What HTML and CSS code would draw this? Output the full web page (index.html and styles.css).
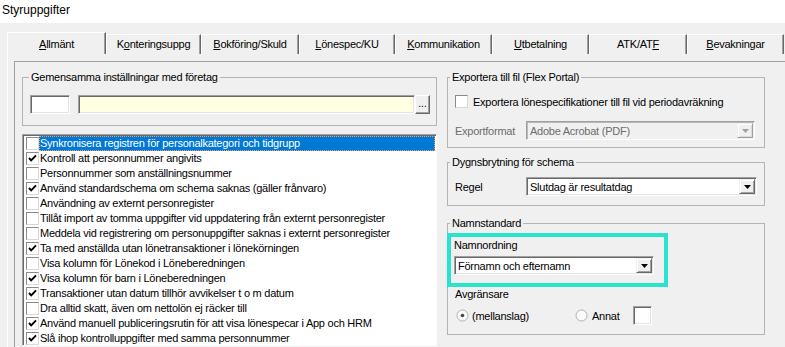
FILE: index.html
```html
<!DOCTYPE html>
<html lang="sv">
<head>
<meta charset="utf-8">
<title>Styruppgifter</title>
<link rel="stylesheet" href="styles.css">
</head>
<body>
<div class="title">Styruppgifter</div>
<div class="tabstrip">
  <div class="tab active w99"><span><u>A</u>llmänt</span></div>
  <div class="tab w95"><span>K<u>o</u>nteringsuppg</span></div>
  <div class="tab w98"><span><u>B</u>okföring/Skuld</span></div>
  <div class="tab w96"><span><u>L</u>önespec/KU</span></div>
  <div class="tab w97"><span><u>K</u>ommunikation</span></div>
  <div class="tab w97"><span><u>U</u>tbetalning</span></div>
  <div class="tab w98"><span>ATK/AT<u>F</u></span></div>
  <div class="tab w97"><span><u>B</u>evakningar</span></div>
</div>
<div class="panel">
  <div class="frame">
    <div class="col-left">
      <fieldset class="group">
        <legend class="legend-left">Gemensamma inställningar med företag</legend>
        <div class="group-body common">
          <div class="field small"></div>
          <div class="field yellow"></div>
          <div class="btn-dots">...</div>
        </div>
      </fieldset>
      <div class="checklist">
        <div class="item selected"><span class="cb"></span><span class="lbl">Synkronisera registren för personalkategori och tidgrupp</span></div>
        <div class="item"><span class="cb checked"><svg width="11" height="11" viewBox="0 0 11 11"><path d="M2 5 L4.2 7.4 L9 2.4" stroke="#000" stroke-width="1.9" fill="none"/></svg></span><span class="lbl">Kontroll att personnummer angivits</span></div>
        <div class="item"><span class="cb"></span><span class="lbl">Personnummer som anställningsnummer</span></div>
        <div class="item"><span class="cb checked"><svg width="11" height="11" viewBox="0 0 11 11"><path d="M2 5 L4.2 7.4 L9 2.4" stroke="#000" stroke-width="1.9" fill="none"/></svg></span><span class="lbl">Använd standardschema om schema saknas (gäller frånvaro)</span></div>
        <div class="item"><span class="cb"></span><span class="lbl">Användning av externt personregister</span></div>
        <div class="item"><span class="cb"></span><span class="lbl">Tillåt import av tomma uppgifter vid uppdatering från externt personregister</span></div>
        <div class="item"><span class="cb"></span><span class="lbl">Meddela vid registrering om personuppgifter saknas i externt personregister</span></div>
        <div class="item"><span class="cb checked"><svg width="11" height="11" viewBox="0 0 11 11"><path d="M2 5 L4.2 7.4 L9 2.4" stroke="#000" stroke-width="1.9" fill="none"/></svg></span><span class="lbl">Ta med anställda utan lönetransaktioner i lönekörningen</span></div>
        <div class="item"><span class="cb"></span><span class="lbl">Visa kolumn för Lönekod i Löneberedningen</span></div>
        <div class="item"><span class="cb checked"><svg width="11" height="11" viewBox="0 0 11 11"><path d="M2 5 L4.2 7.4 L9 2.4" stroke="#000" stroke-width="1.9" fill="none"/></svg></span><span class="lbl">Visa kolumn för barn i Löneberedningen</span></div>
        <div class="item"><span class="cb checked"><svg width="11" height="11" viewBox="0 0 11 11"><path d="M2 5 L4.2 7.4 L9 2.4" stroke="#000" stroke-width="1.9" fill="none"/></svg></span><span class="lbl">Transaktioner utan datum tillhör avvikelser t o m datum</span></div>
        <div class="item"><span class="cb"></span><span class="lbl">Dra alltid skatt, även om nettolön ej räcker till</span></div>
        <div class="item"><span class="cb checked"><svg width="11" height="11" viewBox="0 0 11 11"><path d="M2 5 L4.2 7.4 L9 2.4" stroke="#000" stroke-width="1.9" fill="none"/></svg></span><span class="lbl">Använd manuell publiceringsrutin för att visa lönespecar i App och HRM</span></div>
        <div class="item"><span class="cb checked"><svg width="11" height="11" viewBox="0 0 11 11"><path d="M2 5 L4.2 7.4 L9 2.4" stroke="#000" stroke-width="1.9" fill="none"/></svg></span><span class="lbl">Slå ihop kontrolluppgifter med samma personnummer</span></div>
      </div>
    </div>
    <div class="col-right">
      <fieldset class="group">
        <legend class="legend-right">Exportera till fil (Flex Portal)</legend>
        <div class="group-body export">
          <div class="check-row"><span class="cb"></span><span>Exportera lönespecifikationer till fil vid periodavräkning</span></div>
          <div class="form-row gap12">
            <span class="flabel disabled">Exportformat</span>
            <div class="combo disabled w229"><span class="ctext">Adobe Acrobat (PDF)</span><span class="cbtn"><svg width="7" height="4" viewBox="0 0 7 4"><path d="M0 0 H7 L3.5 4 Z" fill="#a0a0a0"/></svg></span></div>
          </div>
        </div>
      </fieldset>
      <fieldset class="group mt7">
        <legend class="legend-right">Dygnsbrytning för schema</legend>
        <div class="group-body day">
          <div class="form-row">
            <span class="flabel">Regel</span>
            <div class="combo w231"><span class="ctext">Slutdag är resultatdag</span><span class="cbtn"><svg width="7" height="4" viewBox="0 0 7 4"><path d="M0 0 H7 L3.5 4 Z" fill="#000"/></svg></span></div>
          </div>
        </div>
      </fieldset>
      <fieldset class="group mt10">
        <legend class="legend-right">Namnstandard</legend>
        <div class="group-body names">
          <div class="highlight">
            <div class="line">Namnordning</div>
            <div class="combo w200 mt4"><span class="ctext">Förnamn och efternamn</span><span class="cbtn"><svg width="7" height="4" viewBox="0 0 7 4"><path d="M0 0 H7 L3.5 4 Z" fill="#000"/></svg></span></div>
          </div>
          <div class="line">Avgränsare</div>
          <div class="radio-row">
            <span class="radio-opt first"><svg class="radio" width="13" height="13" viewBox="0 0 13 13"><circle cx="6.5" cy="6.5" r="5.5" fill="#fafafa" stroke="#b0b0b0"/><circle cx="6.5" cy="6.5" r="1.8" fill="#444"/></svg><span>(mellanslag)</span></span>
            <span class="radio-opt"><svg class="radio" width="13" height="13" viewBox="0 0 13 13"><circle cx="6.5" cy="6.5" r="5.5" fill="#fafafa" stroke="#b0b0b0"/></svg><span class="annat">Annat</span></span>
            <div class="field tiny"></div>
          </div>
        </div>
      </fieldset>
    </div>
  </div>
</div>
</body>
</html>
```
FILE: styles.css
```css
* { box-sizing: border-box; }
html, body { margin: 0; padding: 0; }
body {
  width: 785px;
  height: 347px;
  overflow: hidden;
  background: #f0f0f0;
  font-family: "Liberation Sans", Arial, sans-serif;
  font-size: 11px;
  letter-spacing: -0.25px;
  color: #000;
}
.title {
  height: 23px;
  background: #fff;
  font-size: 12px;
  letter-spacing: 0;
  line-height: 20px;
  padding-left: 2px;
}
.tabstrip {
  display: flex;
  align-items: flex-end;
  height: 22px;
  margin-top: 9px;
  padding-left: 7px;
}
.tab {
  height: 20px;
  display: flex;
  align-items: center;
  justify-content: center;
  padding-bottom: 1px;
  background: #f0f0f0;
  border-top: 1px solid #fff;
  border-left: 1px solid #fff;
  border-right: 1px solid #696969;
  box-shadow: inset -1px 0 #a0a0a0;
  white-space: nowrap;
}
.tab.active { height: 22px; padding-bottom: 0; }
.w95 { width: 95px; } .w96 { width: 96px; } .w97 { width: 97px; }
.w98 { width: 98px; } .w99 { width: 99px; }
.panel {
  margin-left: 7px;
  border-left: 1px solid #fff;
  padding: 7px 0 0 6px;
}
.frame {
  display: flex;
  gap: 10px;
  width: 771px;
  height: 286px;
  overflow: hidden;
  border-top: 1px solid #a0a0a0;
  border-left: 1px solid #a0a0a0;
  padding: 8px 0 0 7px;
}
.col-left { width: 415px; flex: none; }
.col-right { width: 318px; flex: none; }

.group {
  margin: 0;
  padding: 0;
  min-width: 0;
  border: 1px solid #b4b4b4;
}
.group > legend {
  padding: 0 2px;
  line-height: 14px;
  height: 14px;
}
.legend-left { margin-left: 6px; }
.legend-right { margin-left: 2px; }
.mt7 { margin-top: 7px; }
.mt10 { margin-top: 10px; }
.mt4 { margin-top: 4px; }

.common {
  display: flex;
  padding: 11px 6px 11px 7px;
}
.field {
  height: 19px;
  background: #fff;
  border: 1px solid;
  border-color: #a0a0a0 #fff #fff #a0a0a0;
  box-shadow: inset 1px 1px #696969, inset -1px -1px #e3e3e3;
}
.field.small { width: 40px; margin-right: 8px; }
.field.yellow { flex: 1; background: #ffffe1; }
.field.tiny { width: 19px; margin-left: 0; }
.btn-dots {
  width: 15px;
  height: 19px;
  background: #f0f0f0;
  border: 1px solid;
  border-color: #fff #696969 #696969 #fff;
  box-shadow: inset -1px -1px #a0a0a0;
  text-align: center;
  line-height: 16px;
  font-size: 10px;
  letter-spacing: 0;
}

.checklist {
  margin-top: 8px;
  height: 212px;
  overflow: hidden;
  background: #fff;
  border: 1px solid;
  border-color: #a0a0a0 #fff #fff #a0a0a0;
  box-shadow: inset 1px 1px #696969;
  padding: 1px 1px 0 3px;
}
.item {
  display: flex;
  align-items: center;
  height: 15px;
  white-space: nowrap;
}
.cb {
  width: 13px;
  height: 13px;
  flex: none;
  background: #fff;
  border: 1px solid;
  border-color: #8a8a8a #d8d8d8 #d8d8d8 #8a8a8a;
  display: flex;
  align-items: center;
  justify-content: center;
}
.item .lbl {
  flex: 1;
  height: 15px;
  line-height: 15px;
  padding-left: 1px;
  margin-left: 0;
}
.item.selected .lbl {
  background: #0078d7;
  color: #fff;
  outline: 1px dotted #f5a04a;
  outline-offset: -1px;
}

.export { padding: 10px 9px 7px 7px; }
.check-row {
  display: flex;
  align-items: center;
  height: 15px;
  gap: 5px;
}
.form-row {
  display: flex;
  align-items: center;
}
.gap12 { margin-top: 12px; }
.flabel { width: 71px; flex: none; }
.disabled { color: #6d6d6d; }

.combo {
  display: flex;
  align-items: center;
  height: 19px;
  background: #fff;
  border: 1px solid;
  border-color: #a0a0a0 #fff #fff #a0a0a0;
  box-shadow: inset 1px 1px #696969, inset -1px -1px #e3e3e3;
  padding: 1px;
}
.combo.disabled {
  background: #f0f0f0;
  box-shadow: inset 1px 1px #b8b8b8;
}
.w229 { width: 229px; } .w231 { width: 231px; } .w200 { width: 200px; }
.ctext { flex: 1; padding-left: 2px; white-space: nowrap; }
.cbtn {
  width: 16px;
  height: 15px;
  flex: none;
  background: #f0f0f0;
  border: 1px solid;
  border-color: #f0f0f0 #696969 #696969 #f0f0f0;
  box-shadow: inset 1px 1px #fff, inset -1px -1px #a0a0a0;
  display: flex;
  align-items: center;
  justify-content: center;
}
.combo.disabled .cbtn {
  border-color: #f0f0f0 #a0a0a0 #a0a0a0 #f0f0f0;
  box-shadow: inset 1px 1px #fff, inset -1px -1px #dcdcdc;
}

.day { padding: 8px 7px 9px 7px; }
.names { padding: 3px 7px 9px 7px; }
.highlight {
  width: 221px;
  margin-left: -8px;
  border: 4px solid #29e3cf;
  padding: 1px 10px 8px 3px;
}
.line { height: 14px; line-height: 14px; }
.radio-row {
  display: flex;
  align-items: center;
  margin-top: 5px;
  height: 19px;
}
.radio-opt {
  display: flex;
  align-items: center;
  gap: 3px;
}
.radio-opt.first { width: 120px; padding-left: 1px; }
.radio { flex: none; }
.annat { margin-left: 1px; width: 41px; }
```
